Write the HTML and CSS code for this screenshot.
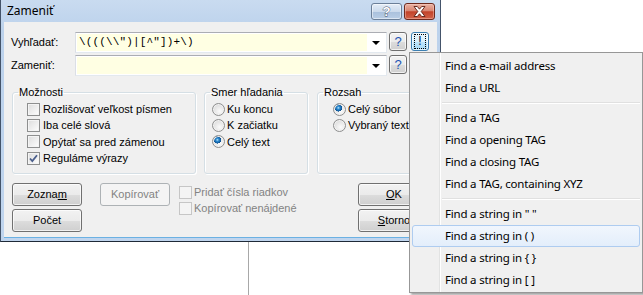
FILE: index.html
```html
<!DOCTYPE html>
<html>
<head>
<meta charset="utf-8">
<link rel="stylesheet" href="styles.css">
</head>
<body>
<div class="dialog">
  <div class="titlebar">
    <span class="title">Zameniť</span>
    <div class="tb-buttons">
      <div class="tb-btn tb-help"><span>?</span></div>
      <div class="tb-btn tb-close">
        <svg width="13" height="11" viewBox="0 0 13 11"><polygon points="1,0.5 4.3,0.5 6.5,3.2 8.7,0.5 12,0.5 8.2,5.5 12,10.5 8.7,10.5 6.5,7.8 4.3,10.5 1,10.5 4.8,5.5" fill="#fff" stroke="#5a1e14" stroke-width="0.9" stroke-linejoin="round"/></svg>
      </div>
    </div>
  </div>
  <div class="body">
    <div class="row">
      <span class="lbl">Vyhľadať:</span>
      <div class="combo"><div class="edit mono">\(((\\")|[^"])+\)</div><div class="drop"><i class="tri"></i></div></div>
      <div class="btn sq"><span class="qm">?</span></div>
      <div class="btn sq hot"><span class="focus">!</span></div>
    </div>
    <div class="row row2">
      <span class="lbl">Zameniť:</span>
      <div class="combo"><div class="edit"></div><div class="drop"><i class="tri"></i></div></div>
      <div class="btn sq"><span class="qm">?</span></div>
    </div>
    <div class="groups">
      <fieldset class="grp g1">
        <legend>Možnosti</legend>
        <div class="grp-in in1">
          <div class="opt"><i class="chk"></i><span>Rozlišovať veľkost písmen</span></div>
          <div class="opt"><i class="chk"></i><span>Iba celé slová</span></div>
          <div class="opt"><i class="chk"></i><span>Opýtať sa pred zámenou</span></div>
          <div class="opt"><i class="chk on"><svg width="11" height="11" viewBox="0 0 11 11"><path d="M2 5.5 L4.3 8 L9 2.2" fill="none" stroke="#4b5f8c" stroke-width="1.8"/></svg></i><span>Reguláme výrazy</span></div>
        </div>
      </fieldset>
      <fieldset class="grp g2">
        <legend>Smer hľadania</legend>
        <div class="grp-in in2">
          <div class="opt"><i class="rad"></i><span>Ku koncu</span></div>
          <div class="opt"><i class="rad"></i><span>K začiatku</span></div>
          <div class="opt"><i class="rad on"></i><span>Celý text</span></div>
        </div>
      </fieldset>
      <fieldset class="grp g3">
        <legend>Rozsah</legend>
        <div class="grp-in in3">
          <div class="opt"><i class="rad on"></i><span>Celý súbor</span></div>
          <div class="opt"><i class="rad"></i><span>Vybraný text</span></div>
        </div>
      </fieldset>
    </div>
    <div class="bottom">
      <div class="col">
        <div class="btn wide">Zozna<u>m</u></div>
        <div class="btn wide">Počet</div>
      </div>
      <div class="btn wide dis kop">Kopírovať</div>
      <div class="col dchecks">
        <div class="opt"><i class="chk dimbox"></i><span>Pridať čísla riadkov</span></div>
        <div class="opt"><i class="chk dimbox"></i><span>Kopírovať nenájdené</span></div>
      </div>
      <div class="col okcol">
        <div class="btn ok"><u>O</u>K</div>
        <div class="btn ok"><u>S</u>torno</div>
      </div>
    </div>
  </div>
</div>
<div class="under"></div>

<div class="menu">
  <div class="mi">Find a e-mail address</div>
  <div class="mi">Find a URL</div>
  <div class="sep"></div>
  <div class="mi">Find a TAG</div>
  <div class="mi">Find a opening TAG</div>
  <div class="mi">Find a closing TAG</div>
  <div class="mi">Find a TAG, containing XYZ</div>
  <div class="sep"></div>
  <div class="mi">Find a string in " "</div>
  <div class="mi sel">Find a string in ( )</div>
  <div class="mi">Find a string in { }</div>
  <div class="mi">Find a string in [ ]</div>
</div>
</body>
</html>
```

FILE: styles.css
```css
* { box-sizing: border-box; }
html, body { margin: 0; padding: 0; }
body {
  width: 643px;
  height: 295px;
  overflow: hidden;
  background: #fff;
  font-family: "Liberation Sans", Arial, sans-serif;
  font-size: 11px;
  color: #000;
  position: relative;
}

/* window */
.dialog {
  width: 441px;
  height: 242px;
  background: linear-gradient(#c9dbf0, #bcd2ec 30px, #c0d5ee);
  border-left: 1px solid #44546a;
  border-right: 1px solid #44546a;
  border-bottom: 1px solid #1f2a38;
  display: flex;
  flex-direction: column;
}
.titlebar {
  height: 22px;
  display: flex;
  align-items: flex-start;
  padding-left: 6px;
  padding-right: 5px;
}
.title {
  font-family: "Noto Sans", "Open Sans", sans-serif;
  font-size: 12px;
  line-height: 22px;
  color: #000;
}
.tb-buttons {
  margin-left: auto;
  margin-top: 3px;
  display: flex;
  gap: 2px;
}
.tb-btn {
  width: 31px;
  height: 17px;
  border-radius: 3px;
  display: flex;
  align-items: center;
  justify-content: center;
}
.tb-help {
  border: 1px solid #6b7f98;
  background: linear-gradient(#e4edf7, #cbdaec 50%, #a9c0dc 51%, #b9cee6);
  box-shadow: inset 0 0 0 1px rgba(255,255,255,0.5);
}
.tb-help span {
  font-family: "Liberation Sans", Arial, sans-serif;
  font-weight: bold;
  font-size: 13px;
  color: #fff;
  -webkit-text-stroke: 0.8px #3b4a5e;
  paint-order: stroke fill;
  line-height: 15px;
}
.tb-close {
  border: 1px solid #6e2a1e;
  background: linear-gradient(#eab2a3, #d98672 45%, #c2432a 52%, #d1634a);
  box-shadow: inset 0 0 0 1px rgba(255,220,210,0.4);
}
.tb-close svg { display: block; }

.body {
  flex: 1;
  margin: 0 3px 3px 3px;
  background: #f0f0f0;
  border-bottom: 1px solid #6bb1e3;
  padding: 10px 0 0 8px;
  display: flex;
  flex-direction: column;
}

.row {
  display: flex;
  align-items: flex-start;
  height: 21px;
}
.row2 { margin-top: 2px; }
.lbl {
  width: 64px;
  margin-left: -1px;
  line-height: 21px;
}
.combo {
  width: 312px;
  height: 21px;
  display: flex;
  background: #fff;
  border: 1px solid #e3e9ef;
  border-top-color: #abadb3;
  border-left-color: #dbdfe6;
}
.edit {
  flex: 1;
  background: #ffffe3;
  margin: 1px 0 1px 1px;
  padding-left: 2px;
  line-height: 17px;
  white-space: pre;
}
.mono {
  font-family: "Liberation Mono", "Courier New", monospace;
  font-size: 11px;
  letter-spacing: 0.15px;
}
.drop {
  width: 19px;
  display: flex;
  align-items: center;
  justify-content: center;
}
.tri {
  display: block;
  width: 0;
  height: 0;
  border-left: 4px solid transparent;
  border-right: 4px solid transparent;
  border-top: 4px solid #000;
  margin-left: -2px;
}

/* buttons */
.btn {
  border: 1px solid #707070;
  border-radius: 3px;
  background: linear-gradient(#f2f2f2, #ebebeb 50%, #dddddd 51%, #cfcfcf);
  box-shadow: inset 0 0 0 1px rgba(255,255,255,0.7);
  display: flex;
  align-items: center;
  justify-content: center;
  line-height: 13px;
}
.btn.sq {
  width: 18px;
  height: 19px;
  margin-left: 2px;
}
.btn.sq + .btn.sq { margin-left: 4px; }
.qm {
  font-size: 13px;
  color: #2155b4;
  font-family: "Liberation Sans", Arial, sans-serif;
}
.btn.hot {
  border-color: #3c7fb1;
  background: linear-gradient(#eaf6fd, #d9f0fc 50%, #bee6fd 51%, #a7d9f5);
  box-shadow: inset 0 0 0 1px rgba(255,255,255,0.6);
}
.focus {
  width: 12px;
  height: 15px;
  border: 1px dotted #000;
  display: flex;
  align-items: center;
  justify-content: center;
  font-family: "DejaVu Sans", sans-serif;
  font-size: 12px;
  line-height: 13px;
  color: #0a2452;
}

/* groups */
.groups {
  display: flex;
  margin-top: 10px;
}
.grp {
  margin: 0;
  padding: 0 5px;
  border: 1px solid #d5dfe5;
  border-radius: 3px;
  box-shadow: inset 1px 1px 0 #fff, 1px 1px 0 #fff;
  min-width: 0;
}
.grp legend {
  padding: 0 1px;
  line-height: 13px;
}
.g1 { width: 184px; }
.g2 { width: 104px; margin-left: 8px; }
.g3 { width: 115px; margin-left: 9px; }
.grp-in {
  height: 74px;
  padding-top: 2px;
}
.in1 { padding-left: 9px; }
.in2 { padding-left: 2px; }
.in3 { padding-left: 10px; }
.opt {
  height: 16.33px;
  display: flex;
  align-items: center;
  white-space: nowrap;
}
.in1 .opt span { margin-left: 3px; }
.in2 .opt span, .in3 .opt span { margin-left: 2px; }

.chk {
  display: flex;
  align-items: center;
  justify-content: center;
  width: 13px;
  height: 13px;
  flex: none;
  border: 1px solid #8e8f8f;
  background: linear-gradient(135deg, #dcdcdc, #f4f4f4 70%, #fff);
  box-shadow: inset 0 0 0 1px #f4f4f4;
}
.chk svg { display: block; }
.rad {
  display: block;
  width: 13px;
  height: 13px;
  flex: none;
  border-radius: 50%;
  border: 1px solid #8e8f8f;
  background: radial-gradient(circle at 60% 65%, #fbfbfb, #e2e2e2 60%, #cfcfcf);
  box-shadow: inset 0 0 0 1px #f2f2f2;
}
.rad.on {
  background:
    radial-gradient(circle at 40% 35%, #bfe6fb 0, #2a8bd2 1.5px, #0b4e8e 3.6px, transparent 3.8px),
    radial-gradient(circle at 60% 65%, #fbfbfb, #e2e2e2 60%, #cfcfcf);
}

/* bottom */
.bottom {
  display: flex;
  align-items: flex-start;
  margin-top: 9px;
}
.col {
  display: flex;
  flex-direction: column;
}
.btn.wide {
  width: 70px;
  height: 23px;
}
.col .btn + .btn { margin-top: 3px; }
.kop {
  width: 71px;
  margin-left: 18px;
}
.btn.dis {
  border-color: #adb2b5;
  background: #f4f4f4;
  box-shadow: none;
  color: #838383;
}
.dchecks {
  margin-left: 9px;
  padding-top: 1px;
  color: #838383;
}
.dchecks .opt { height: 16px; }
.dchecks .opt span { margin-left: 2px; }
.dimbox {
  border-color: #c6c6c6;
  background: #f4f4f4;
  box-shadow: none;
}
.okcol { margin-left: auto; margin-right: 7px; }
.btn.ok {
  width: 72px;
  height: 23px;
}

/* area below the dialog */
.under {
  height: 53px;
  margin-left: 248px;
  border-left: 1px solid #a8a8a8;
}

/* popup menu */
.menu {
  position: absolute;
  left: 409px;
  top: 52px;
  width: 234px;
  height: 241px;
  border: 1px solid #979797;
  background:
    linear-gradient(90deg, transparent 29px, #e2e3e3 29px, #e2e3e3 30px, #fff 30px, #fff 31px, transparent 31px),
    #f0f0f0;
  box-shadow: 2px 2px 2px rgba(0,0,0,0.35);
  padding: 2px;
  font-family: "Noto Sans", "Open Sans", sans-serif;
  font-size: 11.5px;
  letter-spacing: -0.2px;
}
.mi {
  height: 22px;
  line-height: 20px;
  padding-left: 32px;
  border: 1px solid transparent;
  border-radius: 3px;
  white-space: nowrap;
}
.mi.sel {
  border-color: #aeccf0;
  background: linear-gradient(#f1f6fd, #e3eefb);
}
.sep {
  height: 8px;
  margin-left: 30px;
  background: linear-gradient(transparent 3px, #e0e0e0 3px, #e0e0e0 4px, #fff 4px, #fff 5px, transparent 5px);
}
```
